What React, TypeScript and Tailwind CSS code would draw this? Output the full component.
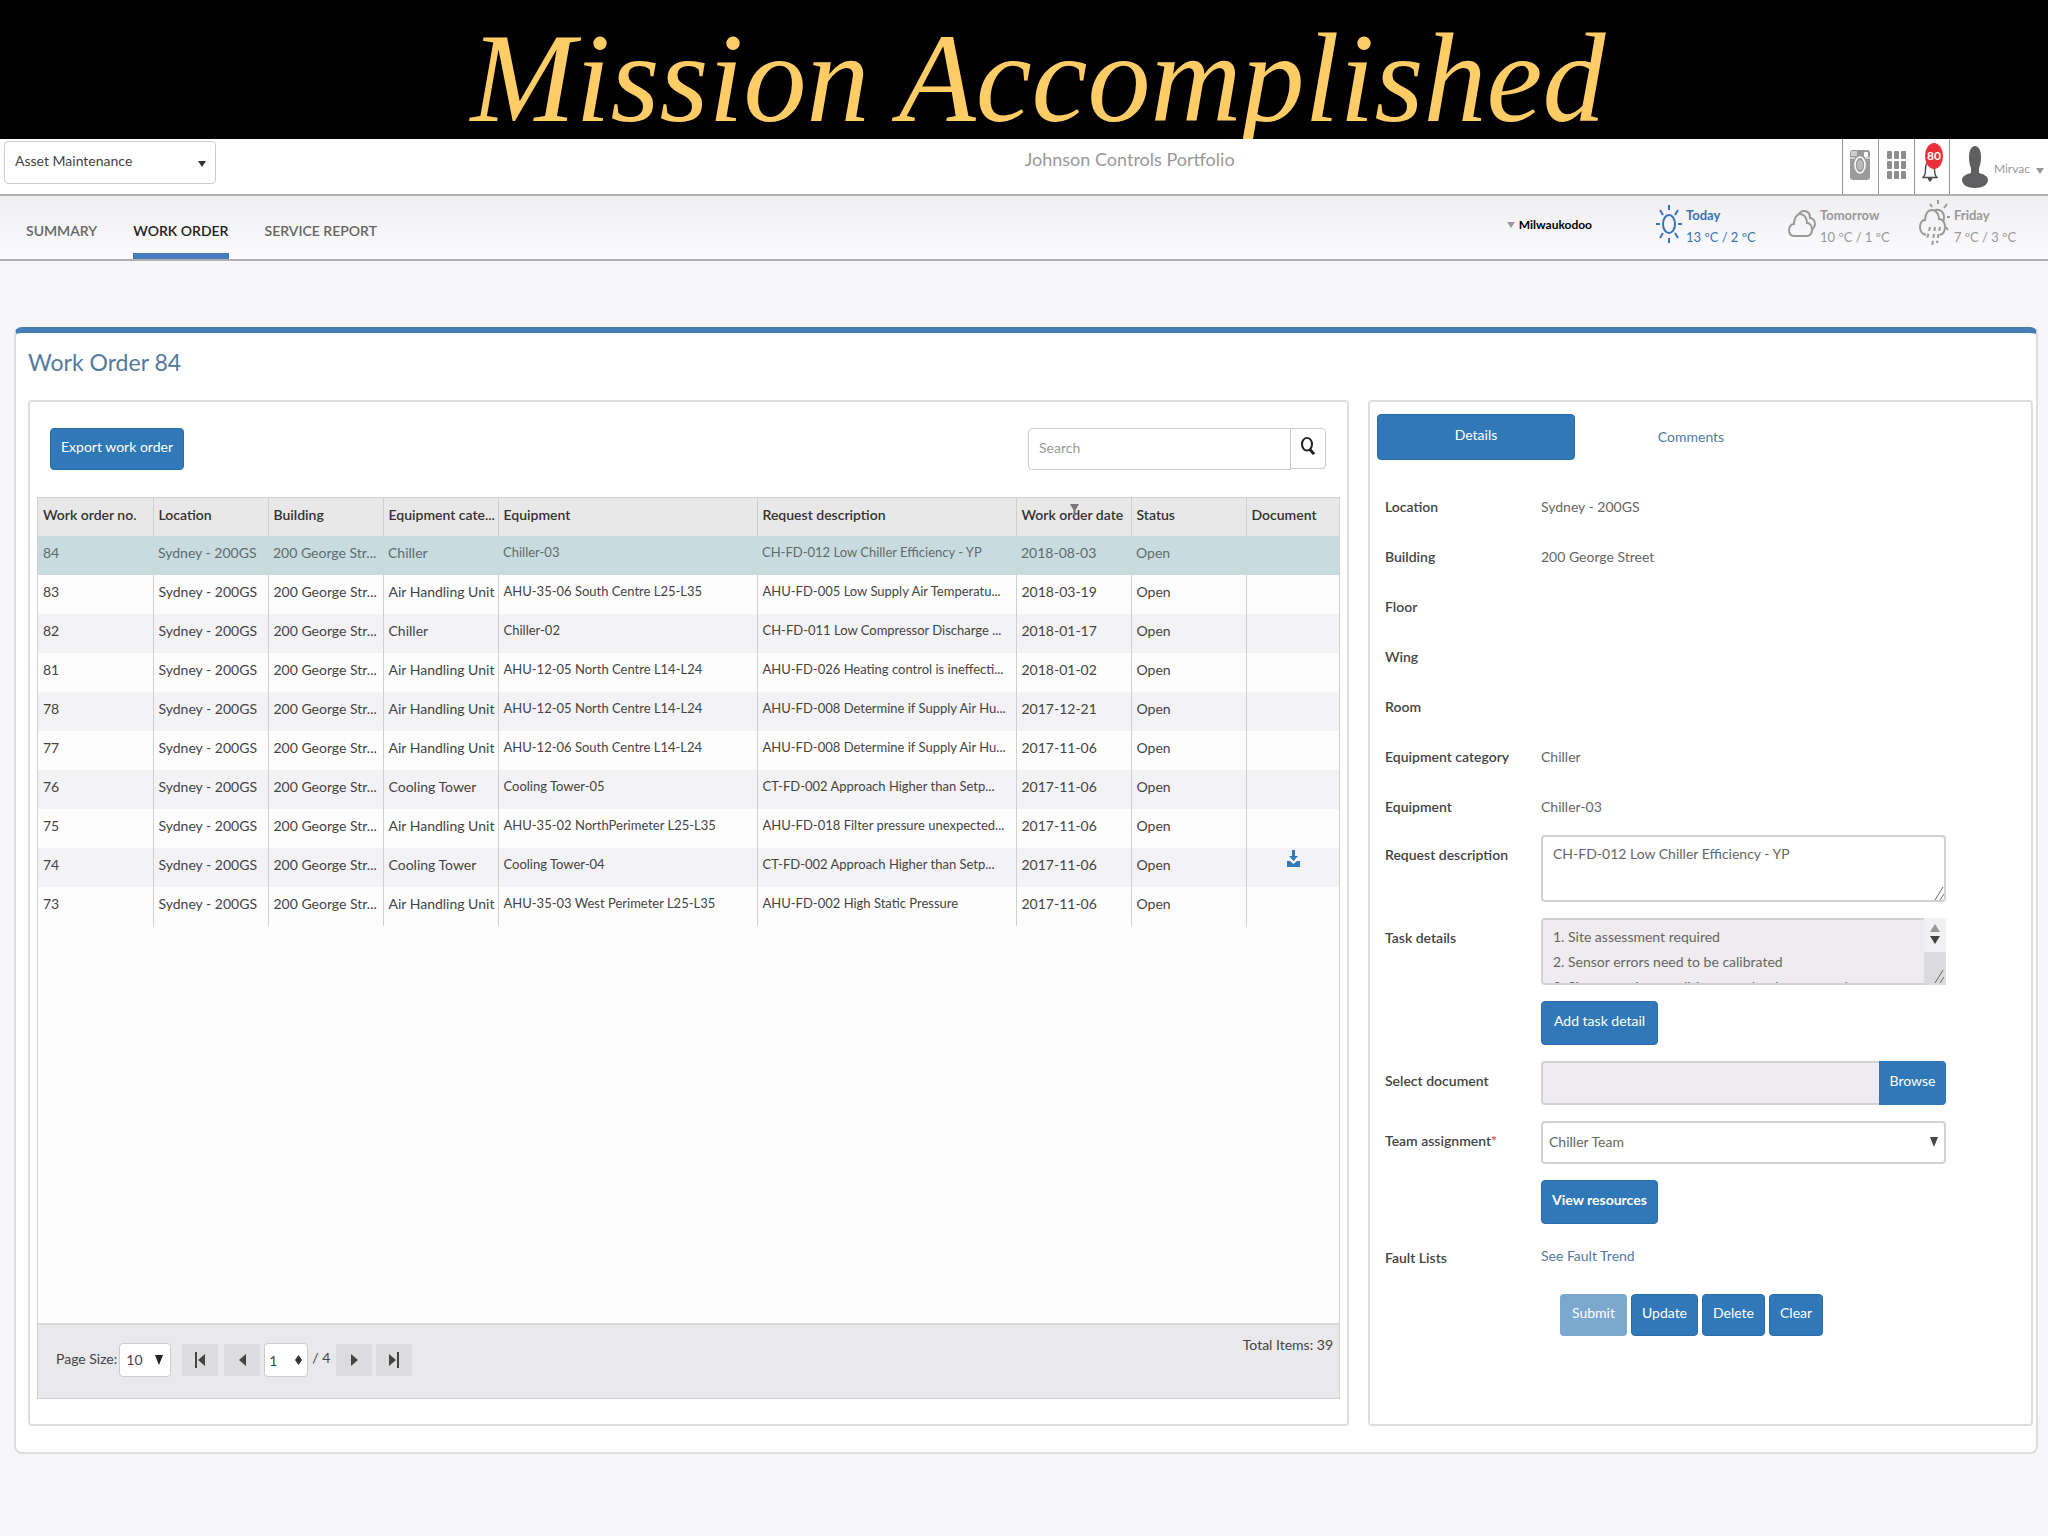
import type { ReactNode } from 'react'

const workOrders = [
  { no: '84', category: 'Chiller', equipment: 'Chiller-03', request: 'CH-FD-012 Low Chiller Efficiency - YP', date: '2018-08-03' },
  { no: '83', category: 'Air Handling Unit', equipment: 'AHU-35-06 South Centre L25-L35', request: 'AHU-FD-005 Low Supply Air Temperatu...', date: '2018-03-19' },
  { no: '82', category: 'Chiller', equipment: 'Chiller-02', request: 'CH-FD-011 Low Compressor Discharge ...', date: '2018-01-17' },
  { no: '81', category: 'Air Handling Unit', equipment: 'AHU-12-05 North Centre L14-L24', request: 'AHU-FD-026 Heating control is ineffecti...', date: '2018-01-02' },
  { no: '78', category: 'Air Handling Unit', equipment: 'AHU-12-05 North Centre L14-L24', request: 'AHU-FD-008 Determine if Supply Air Hu...', date: '2017-12-21' },
  { no: '77', category: 'Air Handling Unit', equipment: 'AHU-12-06 South Centre L14-L24', request: 'AHU-FD-008 Determine if Supply Air Hu...', date: '2017-11-06' },
  { no: '76', category: 'Cooling Tower', equipment: 'Cooling Tower-05', request: 'CT-FD-002 Approach Higher than Setp...', date: '2017-11-06' },
  { no: '75', category: 'Air Handling Unit', equipment: 'AHU-35-02 NorthPerimeter L25-L35', request: 'AHU-FD-018 Filter pressure unexpected...', date: '2017-11-06' },
  { no: '74', category: 'Cooling Tower', equipment: 'Cooling Tower-04', request: 'CT-FD-002 Approach Higher than Setp...', date: '2017-11-06', document: true },
  { no: '73', category: 'Air Handling Unit', equipment: 'AHU-35-03 West Perimeter L25-L35', request: 'AHU-FD-002 High Static Pressure', date: '2017-11-06' },
]

const columns = [
  { title: 'Work order no.', width: 'w-[115px]' },
  { title: 'Location', width: 'w-[115px]' },
  { title: 'Building', width: 'w-[115px]' },
  { title: 'Equipment cate...', width: 'w-[115px]' },
  { title: 'Equipment', width: '' },
  { title: 'Request description', width: '' },
  { title: 'Work order date', width: 'w-[115px]' },
  { title: 'Status', width: 'w-[115px]' },
  { title: 'Document', width: 'w-[93px]' },
]

const facts = [
  { label: 'Location', value: 'Sydney - 200GS' },
  { label: 'Building', value: '200 George Street' },
  { label: 'Floor', value: '' },
  { label: 'Wing', value: '' },
  { label: 'Room', value: '' },
  { label: 'Equipment category', value: 'Chiller' },
  { label: 'Equipment', value: 'Chiller-03' },
]

const btn = 'rounded bg-[#3078b8] text-white border border-[#2b6ca8]'

function Caret({ className }: { className: string }) {
  return (
    <svg viewBox="0 0 8 8" preserveAspectRatio="none" className={className} fill="currentColor" aria-hidden="true">
      <path d="M0 0h8L4 8z" />
    </svg>
  )
}

function CameraIcon() {
  return (
    <svg width="20" height="30" viewBox="0 0 20 30" aria-hidden="true">
      <path fill="#9b9b9b" d="M3 0h14a3 3 0 0 1 3 4v22a3 3 0 0 1-3 4H3a3 3 0 0 1-3-4V4a3 3 0 0 1 3-4z" />
      <path stroke="#fff" d="M2 1v5M4 1v5M6 1v5M0 8h5M15 8h5" />
      <rect x="14" y="2" width="4" height="5" rx="1" fill="#fff" />
      <ellipse cx="10" cy="15" rx="5" ry="8" fill="#9b9b9b" stroke="#fff" strokeWidth="1.5" />
      <ellipse cx="10" cy="15" rx="3" ry="5" fill="#b9b9b9" />
    </svg>
  )
}

function GridIcon() {
  return (
    <svg width="19" height="28" viewBox="0 0 19 28" fill="#8d8d8d" aria-hidden="true">
      {[0, 10, 20].map((y) =>
        [0, 7, 14].map((x) => <rect key={`${x}-${y}`} x={x} y={y} width="5" height="8" rx="1" />),
      )}
    </svg>
  )
}

function BellIcon() {
  return (
    <svg width="16" height="22" viewBox="0 0 16 22" fill="none" stroke="#4a4a4a" aria-hidden="true">
      <path strokeWidth="1.4" d="M1 17.500c2-2 2.500-4 2.500-8C3.500 4 5 2 8 2s4.500 2 4.500 7.500c0 4 .5 6 2.500 8z" />
      <path fill="#4a4a4a" d="M6 18.500h4l-2 3z" />
    </svg>
  )
}

function UserIcon() {
  return (
    <svg width="26" height="42" viewBox="0 0 26 42" fill="#5f5e60" aria-hidden="true">
      <path d="M13 0c4 0 6 5 6 11 0 5-1 9-2 11v5c4 1 9 3 9 7 0 5-6 8-13 8S0 39 0 34c0-4 5-6 9-7v-5c-1-2-2-6-2-11C7 5 9 0 13 0z" />
    </svg>
  )
}

function SunIcon() {
  return (
    <svg width="26" height="38" viewBox="0 0 26 38" fill="none" stroke="#3b73b9" strokeWidth="2" aria-hidden="true">
      <ellipse cx="13" cy="19" rx="6" ry="9" />
      <path d="M13 0v5M13 33v5M0 19h4M22 19h4M4 5l3 5M22 5l-3 5M4 33l3-5M22 33l-3-5" />
    </svg>
  )
}

function CloudsIcon() {
  return (
    <svg width="28" height="28" viewBox="0 0 28 28" fill="none" stroke="#999" strokeWidth="2" aria-hidden="true">
      <path d="M6 26c-3 0-5-2-5-6 0-3 2-6 5-6C6 8 9 4 12 4c4 0 7 4 7 9 3 0 5 3 5 7 0 3-2 6-5 6z" />
      <path d="M11 4c1-2 3-3 5-3 4 0 6 3 6 7 3 0 5 3 5 6 0 2-1 4-3 6" />
    </svg>
  )
}

function RainIcon() {
  return (
    <svg width="31" height="48" viewBox="0 0 31 48" fill="none" stroke="#999" strokeWidth="2" aria-hidden="true">
      <path d="M7 35c-4-1-6-4-6-8s2-7 5-7c0-6 3-10 7-10s7 4 7 9c4 0 6 4 6 8s-2 7-5 8" />
      <path d="M15 11c4-3 10 0 10 6 0 2 0 3-1 5M19 0v4M11 4l2 3M28 4l-3 4M28 17h3M27 27l2 3" />
      <path strokeDasharray="4 3" d="M11 27l-3 12M16 27l-3 20M21 27l-3 16" />
    </svg>
  )
}

function DownloadIcon() {
  return (
    <svg width="13" height="17" viewBox="0 0 13 17" fill="#337ab7" aria-hidden="true">
      <path d="M5 0h3v6h3L6.500 11 2 6h3zM0 11h3l3.500 3 3.500-3h3v6H0z" />
    </svg>
  )
}

function Weather({ icon, day, temp, tone, width }: { icon: ReactNode; day: string; temp: string; tone: string; width: string }) {
  return (
    <div className={`flex items-center gap-1 ${width} ${tone}`}>
      {icon}
      <div className="pt-1 text-[13px] leading-[22px] whitespace-nowrap">
        <div className="font-bold">{day}</div>
        <div>{temp}</div>
      </div>
    </div>
  )
}

function TopBar() {
  return (
    <header className="flex h-[57px] items-stretch border-b-2 border-[#b0afb1] bg-white">
      <div className="flex-[5] px-1 pt-0.5">
        <div className="relative h-[43px] w-[212px]">
          <select aria-label="Module" className="h-full w-full appearance-none rounded border border-[#ccc] bg-white px-2.5 pb-1 text-[#444]">
            <option>Asset Maintenance</option>
          </select>
          <Caret className="pointer-events-none absolute top-5 right-2.5 h-1.5 w-2 text-[#333]" />
        </div>
      </div>
      <div className="pt-1.5 text-lg leading-7 text-[#999]">Johnson Controls Portfolio</div>
      <div className="flex flex-[4] items-stretch justify-end">
        <button aria-label="Camera" className="flex w-9 items-center justify-center border-l border-[#999] pb-1"><CameraIcon /></button>
        <button aria-label="Apps" className="flex w-9 items-center justify-center border-l border-[#999] pb-1"><GridIcon /></button>
        <button aria-label="Notifications" className="relative flex w-9 items-end justify-center border-x border-[#999] pr-1 pb-3">
          <BellIcon />
          <span className="absolute top-1 right-1.5 flex h-[26px] w-[18px] items-center justify-center rounded-[50%] bg-[#e8303a] text-xs font-bold text-white">80</span>
        </button>
        <button className="flex items-center gap-1.5 pr-1 pl-3 text-xs text-[#999]">
          <UserIcon />
          <span className="pt-1">Mirvac</span>
          <Caret className="mt-2 h-1.5 w-2" />
        </button>
      </div>
    </header>
  )
}

function NavBar() {
  return (
    <nav className="flex h-[65px] items-stretch justify-between border-b-2 border-[#b0afb1] bg-linear-to-b from-[#efeef0] to-[#fcfbfd] pl-[26px]">
      <div className="flex gap-9 font-semibold text-[#666]">
        <a href="#summary" className="pt-[25px]">SUMMARY</a>
        <a href="#work-order" className="border-b-[6px] border-[#447db9] pt-[25px] text-[#222]">WORK ORDER</a>
        <a href="#service-report" className="pt-[25px]">SERVICE REPORT</a>
      </div>
      <div className="flex items-center pb-2">
        <button className="mr-16 flex items-center gap-1 pt-0.5 text-xs font-bold text-black">
          <Caret className="h-1.5 w-2 text-[#999]" />
          Milwaukodoo
        </button>
        <Weather icon={<SunIcon />} day="Today" temp="13 ºC / 2 ºC" tone="text-[#3b73b9]" width="w-[132px]" />
        <Weather icon={<CloudsIcon />} day="Tomorrow" temp="10 ºC / 1 ºC" tone="text-[#999]" width="w-[131px]" />
        <Weather icon={<RainIcon />} day="Friday" temp="7 ºC / 3 ºC" tone="text-[#999]" width="w-[129px]" />
      </div>
    </nav>
  )
}

function Cell({ children, selected, small }: { children?: ReactNode; selected: boolean; small?: boolean }) {
  return (
    <td
      className={`pb-1.5 pl-[5px] whitespace-nowrap first:border-l-0 ${selected ? '' : 'border-l border-[#d0d0d0]'} ${small ? 'text-[13px]' : ''}`}
    >
      {children}
    </td>
  )
}

function OrdersTable() {
  return (
    <table className="w-full table-fixed border-collapse text-left text-[#444]">
      <colgroup>
        {columns.map((c) => (
          <col key={c.title} className={c.width} />
        ))}
      </colgroup>
      <thead>
        <tr className="h-[38px] bg-[#e8e8e8] text-[#333]">
          {columns.map((c) => (
            <th key={c.title} className="relative border-l border-[#d0d0d0] pb-1 pl-[5px] font-semibold whitespace-nowrap first:border-l-0">
              {c.title}
              {c.title === 'Work order date' && (
                <svg width="9" height="12" viewBox="0 0 9 12" className="absolute top-1.5 left-[53px]" fill="#777" aria-hidden="true">
                  <path d="M0 0h9L5.500 6v6h-2V6z" />
                </svg>
              )}
            </th>
          ))}
        </tr>
      </thead>
      <tbody>
        {workOrders.map((o, i) => (
          <tr
            key={o.no}
            className={`h-[39px] ${i === 0 ? 'bg-[#c8dcdf] text-[#5f6b6d]' : i % 2 === 0 ? 'bg-[#f3f2f4]' : 'bg-[#fefdfe]'}`}
          >
            <Cell selected={i === 0}>{o.no}</Cell>
            <Cell selected={i === 0}>Sydney - 200GS</Cell>
            <Cell selected={i === 0}>200 George Str...</Cell>
            <Cell selected={i === 0}>{o.category}</Cell>
            <Cell selected={i === 0} small>{o.equipment}</Cell>
            <Cell selected={i === 0} small>{o.request}</Cell>
            <Cell selected={i === 0}>{o.date}</Cell>
            <Cell selected={i === 0}>Open</Cell>
            <Cell selected={i === 0}>
              {o.document && (
                <a href="#document" aria-label="Download document" className="flex justify-center pr-1 pb-3">
                  <DownloadIcon />
                </a>
              )}
            </Cell>
          </tr>
        ))}
      </tbody>
    </table>
  )
}

function PagerButton({ label, d }: { label: string; d: string }) {
  return (
    <button aria-label={label} className="flex h-8 w-9 items-center justify-center bg-[#dcdbdd]">
      <svg width="12" height="16" viewBox="0 0 12 16" fill="#444" aria-hidden="true">
        <path d={d} />
      </svg>
    </button>
  )
}

function Pager() {
  return (
    <div className="flex h-[75px] justify-between border-t-2 border-[#d8d7d9] bg-[#e9e8ea] pt-3 pr-1.5 pl-[18px] text-[#444]">
      <div className="mt-1.5 flex h-[34px] items-center">
        <label htmlFor="page-size" className="pb-0.5">Page Size:</label>
        <div className="relative mr-[11px] ml-0.5 h-[34px] w-[52px]">
          <select id="page-size" className="h-full w-full appearance-none rounded border border-[#ccc] bg-white pl-1.5">
            <option>10</option>
          </select>
          <Caret className="pointer-events-none absolute top-3 right-2 h-2.5 w-2 text-[#222]" />
        </div>
        <div className="flex gap-1.5">
          <PagerButton label="First page" d="M1 0h2v16H1zM11 2v12L4 8z" />
          <PagerButton label="Previous page" d="M10 2v12L3 8z" />
        </div>
        <div className="relative mx-1 h-[34px] w-11">
          <input
            type="number"
            aria-label="Page"
            defaultValue={1}
            className="h-full w-full [appearance:textfield] rounded border border-[#ccc] bg-white pl-1 [&::-webkit-inner-spin-button]:appearance-none"
          />
          <svg width="7" height="10" viewBox="0 0 7 10" className="pointer-events-none absolute top-3 right-1.5" fill="#333" aria-hidden="true">
            <path d="M3.500 0L7 5 3.500 10 0 5z" />
          </svg>
        </div>
        <span className="mr-1.5 pb-1">/ 4</span>
        <div className="flex gap-1">
          <PagerButton label="Next page" d="M3 2v12l7-6z" />
          <PagerButton label="Last page" d="M9 0h2v16H9zM1 2v12l7-6z" />
        </div>
      </div>
      <div className="leading-4">Total Items: 39</div>
    </div>
  )
}

function OrdersPanel() {
  return (
    <section className="flex min-w-0 flex-col rounded border-2 border-[#dddcde] bg-white px-[7px] pt-[26px] pb-[25px]">
      <div className="flex h-[69px] items-start justify-between pr-3.5 pl-[13px]">
        <button className={`h-[42px] px-2.5 pb-1 ${btn}`}>Export work order</button>
        <div className="flex w-[298px]">
          <input
            type="search"
            aria-label="Search"
            placeholder="Search"
            className="h-[42px] min-w-0 flex-1 rounded-l border border-[#ccc] px-2.5 pb-1 placeholder:text-[#999]"
          />
          <button aria-label="Run search" className="-ml-px flex h-[41px] w-9 justify-center rounded-r border border-[#ccc] pt-2">
            <svg width="14" height="18" viewBox="0 0 14 20" preserveAspectRatio="none" fill="none" stroke="#222" strokeWidth="2" aria-hidden="true">
              <ellipse cx="6" cy="8" rx="5" ry="7" />
              <path strokeWidth="3" d="M9 14l4 5" />
            </svg>
          </button>
        </div>
      </div>
      <div className="flex flex-1 flex-col border border-[#d0cfd1] bg-[#fefdfe]">
        <div className="flex-1">
          <OrdersTable />
        </div>
        <Pager />
      </div>
    </section>
  )
}

function ResizeGrip() {
  return (
    <svg width="10" height="14" viewBox="0 0 10 14" className="pointer-events-none absolute right-0.5 bottom-0.5" stroke="#666" aria-hidden="true">
      <path d="M1 14L9 1M6 14l4-6" />
    </svg>
  )
}

function Row({ label, htmlFor, children, gap }: { label?: ReactNode; htmlFor?: string; children: ReactNode; gap: string }) {
  return (
    <div className={`flex ${gap}`}>
      <div className="w-[156px] shrink-0 pt-2.5 font-semibold text-[#444]">
        {label && <label htmlFor={htmlFor}>{label}</label>}
      </div>
      <div className="relative max-w-[405px] min-w-0 flex-1">{children}</div>
    </div>
  )
}

function DetailsPanel() {
  return (
    <section className="min-w-0 rounded border-2 border-[#dddcde] bg-white px-[7px] pt-3">
      <div className="flex">
        <button className={`h-[46px] w-[198px] pb-1 ${btn}`}>Details</button>
        <button className="h-[46px] w-[232px] text-[#557a9f]">Comments</button>
      </div>
      <form className="px-2 pt-[22px] text-[#666]">
        <dl>
          {facts.map((f) => (
            <div key={f.label} className="flex h-[50px] items-center">
              <dt className="w-[156px] shrink-0 font-semibold text-[#444]">{f.label}</dt>
              <dd>{f.value}</dd>
            </div>
          ))}
        </dl>
        <Row label="Request description" htmlFor="request" gap="mt-[3px]">
          <textarea
            id="request"
            defaultValue="CH-FD-012 Low Chiller Efficiency - YP"
            className="block h-[67px] w-full resize-none rounded border-2 border-[#d2d1d3] px-2.5 pt-1 leading-[25px]"
          />
          <ResizeGrip />
        </Row>
        <Row label="Task details" htmlFor="tasks" gap="mt-4">
          <textarea
            id="tasks"
            readOnly
            value={'1. Site assessment required\n2. Sensor errors need to be calibrated\n3. Site operating conditions need to be assessed'}
            className="block h-[67px] w-full resize-none overflow-hidden rounded border-2 border-[#d2d1d3] bg-[#eeecee] px-2.5 pt-1 leading-[25px]"
          />
          <div className="pointer-events-none absolute inset-y-0 right-0 w-[22px] bg-[#dbdadc]">
            <div className="flex h-[34px] flex-col items-center gap-1 bg-[#f1f0f2] pt-1.5">
              <Caret className="h-2 w-2.5 rotate-180 text-[#999]" />
              <Caret className="h-2 w-2.5 text-[#444]" />
            </div>
          </div>
          <ResizeGrip />
        </Row>
        <Row gap="mt-4">
          <button type="button" className={`h-11 px-3 pb-1 ${btn}`}>Add task detail</button>
        </Row>
        <Row label="Select document" htmlFor="document" gap="mt-4">
          <div className="flex h-11">
            <input id="document" readOnly className="min-w-0 flex-1 rounded-l border-2 border-r-0 border-[#d2d1d3] bg-[#eeecee]" />
            <button type="button" className="w-[67px] rounded-r bg-[#3078b8] pb-1 text-white">Browse</button>
          </div>
        </Row>
        <Row label={<>Team assignment<span className="text-[#e0405a]">*</span></>} htmlFor="team" gap="mt-4">
          <select id="team" className="block h-[43px] w-full appearance-none rounded border-2 border-[#d2d1d3] bg-white px-1.5 pb-0.5">
            <option>Chiller Team</option>
          </select>
          <Caret className="pointer-events-none absolute top-4 right-2 h-2.5 w-2 text-[#444]" />
        </Row>
        <Row gap="mt-4">
          <button type="button" className={`h-11 px-2.5 pb-1 font-bold ${btn}`}>View resources</button>
        </Row>
        <Row label="Fault Lists" gap="mt-3.5">
          <a href="#fault-trend" className="block pt-2 text-[#557a9f]">See Fault Trend</a>
        </Row>
        <div className="mt-[26px] flex gap-1 pl-[175px]">
          <button type="button" disabled className="h-[42px] rounded bg-[#7aa8cf] px-3 pb-1 text-white">Submit</button>
          <button type="button" className={`h-[42px] px-2.5 pb-1 ${btn}`}>Update</button>
          <button type="button" className={`h-[42px] px-2.5 pb-1 ${btn}`}>Delete</button>
          <button type="button" className={`h-[42px] px-2.5 pb-1 ${btn}`}>Clear</button>
        </div>
      </form>
    </section>
  )
}

export default function App() {
  return (
    <div className="flex min-h-screen flex-col bg-[#f6f5f7] font-['Lato',sans-serif] text-sm">
      <div className="h-[139px] bg-black pl-7 text-center font-['Liberation_Serif',serif] text-[126px] leading-[158px] text-[#ffcc66] italic">
        Mission Accomplished
      </div>
      {/* the bars sit over the banner, so its descender stops at their edge */}
      <div className="relative">
        <TopBar />
        <NavBar />
      </div>
      <main className="mr-2.5 mt-[66px] mb-[82px] ml-3.5 flex flex-1 flex-col rounded-lg border-2 border-t-[6px] border-[#dddcde] border-t-[#447db5] bg-white pr-[3px] pb-[26px] pl-3">
        <h1 className="pt-3.5 pb-[22px] text-[23px] leading-[31px] text-[#557a9f]">Work Order 84</h1>
        <div className="grid flex-1 grid-cols-[minmax(0,1321fr)_minmax(0,665fr)] gap-[19px]">
          <OrdersPanel />
          <DetailsPanel />
        </div>
      </main>
    </div>
  )
}
